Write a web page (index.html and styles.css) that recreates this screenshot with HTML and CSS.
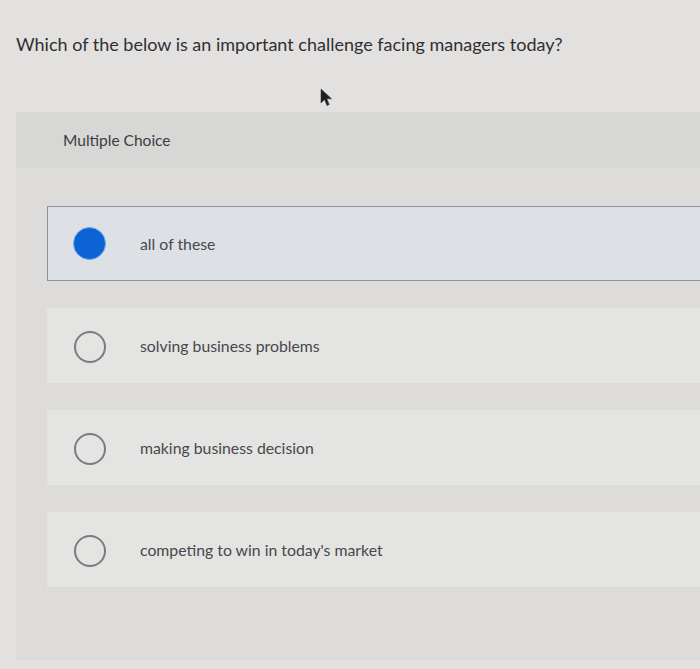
FILE: index.html
```html
<!DOCTYPE html>
<html lang="en">
<head>
<meta charset="utf-8">
<title>Multiple Choice</title>
<link rel="stylesheet" href="styles.css">
</head>
<body>
<main class="page">
  <h1 class="question">Which of the below is an important challenge facing managers today?</h1>
  <section class="panel">
    <header class="panel-head">Multiple Choice</header>
    <ul class="options">
      <li class="option selected"><span class="radio"></span><span class="label">all of these</span></li>
      <li class="option"><span class="radio"></span><span class="label">solving business problems</span></li>
      <li class="option"><span class="radio"></span><span class="label">making business decision</span></li>
      <li class="option"><span class="radio"></span><span class="label">competing to win in today's market</span></li>
    </ul>
  </section>
  <svg class="cursor" width="14" height="20" viewBox="0 0 14 20" aria-hidden="true">
    <path d="M1 1 L1 15 L4.5 11.5 L7 17.5 L9.2 16.6 L6.8 10.8 L11.5 10.8 Z" fill="#1e1e22" stroke="#3a3a3e" stroke-width="0.6"/>
  </svg>
</main>
</body>
</html>
```

FILE: styles.css
```css
* { box-sizing: border-box; }
html, body { margin: 0; padding: 0; }
body {
  background: #e2e1df;
  font-family: "Lato", "Open Sans", sans-serif;
  color: #3a3a3c;
  overflow: hidden;
}
.page {
  position: relative;
  width: 700px;
  height: 669px;
  padding-top: 32px;
}
.question {
  margin: 0 0 0 16px;
  font-size: 18px;
  line-height: 24px;
  font-weight: 400;
  color: #2f2f33;
}
.panel {
  margin: 56px 0 0 16px;
  width: 700px;
  height: 548px;
  background: #dddcda;
}
.panel-head {
  height: 56px;
  display: flex;
  align-items: center;
  padding-left: 47px;
  font-size: 15.5px;
  color: #3c3c40;
  background: #d7d7d5;
}
.options {
  list-style: none;
  margin: 0;
  padding: 38px 0 0 31px;
  display: flex;
  flex-direction: column;
  gap: 27px;
}
.option {
  height: 75px;
  display: flex;
  align-items: center;
  padding-left: 27px;
  background: #e4e4e2;
}
.option.selected {
  background: #dde1e5;
  border: 1.5px solid #8892a0;
  border-right: none;
  padding-left: 25px;
}
.radio {
  width: 32px;
  height: 32px;
  border-radius: 50%;
  border: 2px solid #7c7c7e;
  flex: none;
  margin-top: 3px;
}
.selected .radio {
  background: #0b63d4;
  border: 1px solid #6fa6ea;
  width: 33px;
  height: 33px;
  margin-top: 0;
}
.label {
  margin-left: 34px;
  font-size: 15.8px;
  color: #48484c;
}
.cursor {
  position: absolute;
  left: 320px;
  top: 88px;
}
```
